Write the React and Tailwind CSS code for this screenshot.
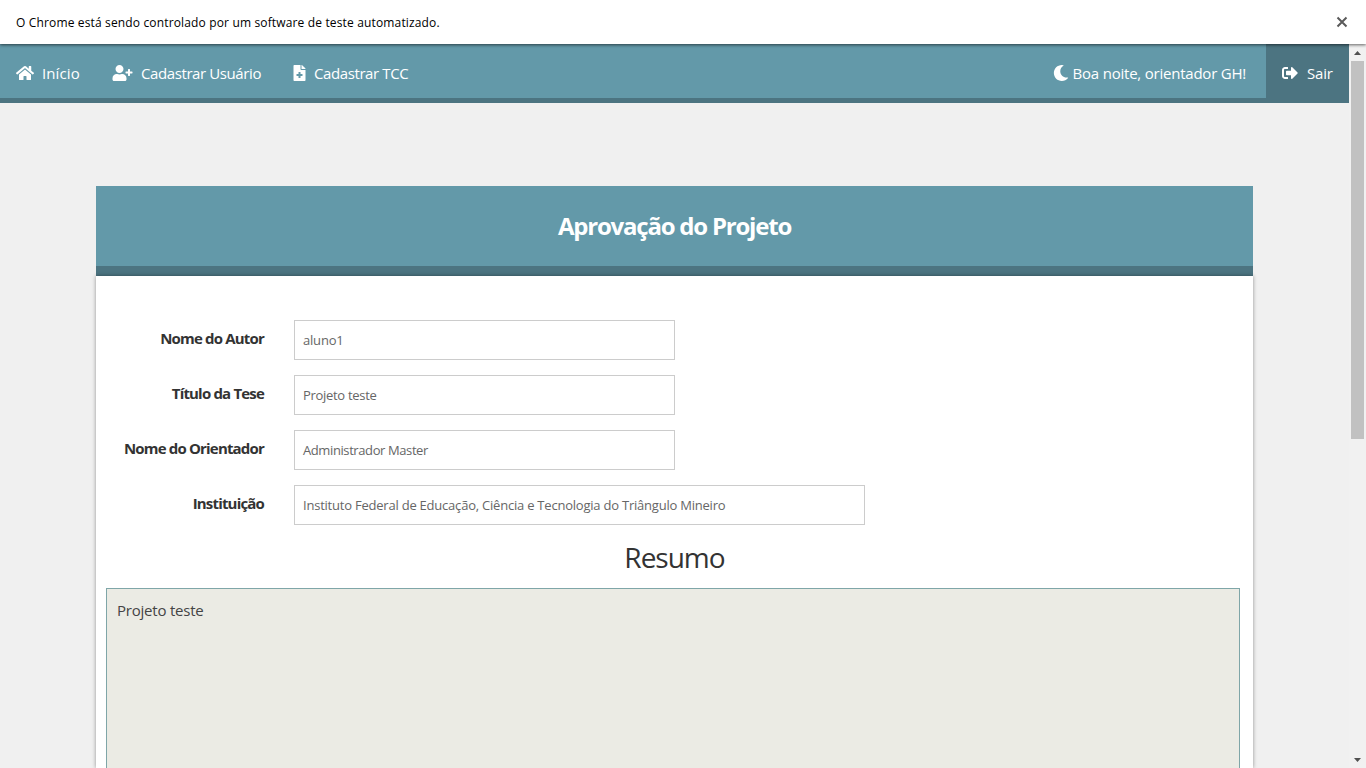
import { FaHome, FaUserPlus, FaFileMedical, FaMoon, FaSignOutAlt } from 'react-icons/fa';

function InfoBar() {
  return (
    <div className="relative z-10 flex h-11 shrink-0 items-center justify-between bg-white pr-[18px] pl-4 shadow-[0_1px_3px_rgba(0,0,0,0.6)]">
      <span className="pt-px text-[12px] tracking-[0.15px] text-black">
        O Chrome está sendo controlado por um software de teste automatizado.
      </span>
      <svg width="12" height="12" viewBox="0 0 12 12" className="text-[#5a5a5a]">
        <path d="M1.5 1.5l9 9M10.5 1.5l-9 9" stroke="currentColor" strokeWidth="2" />
      </svg>
    </div>
  );
}

function NavBar() {
  return (
    <nav className="flex h-[59px] items-stretch border-b-[5px] border-[#4c7481] bg-[#6399a9] text-[15px] text-white">
      <a className="flex w-[96px] items-center gap-2 pt-1 pl-4 whitespace-nowrap">
        <FaHome size={18} />
        <span className="tracking-[0.1px]">Início</span>
      </a>
      <a className="flex w-[182px] items-center gap-2 pt-1 pl-4 whitespace-nowrap">
        <FaUserPlus className="h-4 w-[21px]" />
        <span className="tracking-[-0.4px]">Cadastrar Usuário</span>
      </a>
      <a className="flex items-center gap-2 pt-1 pl-[15px] whitespace-nowrap">
        <FaFileMedical size={16} className="w-[13px]" />
        <span className="tracking-[-0.4px]">Cadastrar TCC</span>
      </a>
      <div className="ml-auto flex items-center gap-[3.5px] pt-1 pr-5 whitespace-nowrap">
        <FaMoon size={16} />
        <span className="tracking-[-0.22px]">Boa noite, orientador GH!</span>
      </div>
      <a className="-mb-[5px] flex w-[83px] items-center gap-[9px] bg-[#4c7481] pb-[1px] pl-4 whitespace-nowrap">
        <FaSignOutAlt size={16} />
        <span className="tracking-[-0.2px]">Sair</span>
      </a>
    </nav>
  );
}

function Field({ label, value, boxClass, valueClass }) {
  return (
    <div className="flex h-10 gap-[30px]">
      <label className="w-[168px] pt-[6px] text-right text-[15px] leading-6 font-bold tracking-[-0.82px] whitespace-nowrap text-[#333]">
        {label}
      </label>
      <div className={`flex items-center border border-[#ccc] px-2 pt-[2px] text-[13px] whitespace-nowrap text-[#666] ${boxClass}`}>
        <span className={valueClass}>{value}</span>
      </div>
    </div>
  );
}

function Scrollbar() {
  return (
    <div className="flex w-[17px] shrink-0 flex-col items-center bg-[#f1f1f1]">
      <div className="flex h-[17px] items-center justify-center">
        <svg width="7" height="4" viewBox="0 0 7 4"><path d="M3.5 0L7 4H0z" fill="#505050" /></svg>
      </div>
      <div className="h-[378px] w-[13px] bg-[#c1c1c1]" />
      <div className="mt-auto flex h-[17px] items-center justify-center">
        <svg width="7" height="4" viewBox="0 0 7 4"><path d="M0 0h7L3.5 4z" fill="#505050" /></svg>
      </div>
    </div>
  );
}

export default function App() {
  return (
    <div className="flex h-screen flex-col overflow-hidden bg-[#f0f0f0] font-['Open_Sans','Noto_Sans',sans-serif]">
      <InfoBar />
      <div className="flex min-h-0 flex-1">
        <div className="flex min-w-0 flex-1 flex-col overflow-hidden">
          <NavBar />
          <main className="mx-24 mt-[83px] flex min-h-0 flex-1 flex-col">
            <header className="flex h-[90px] shrink-0 items-center justify-center border-b-[10px] border-[#4c7481] bg-[#6399a9]">
              <h1 className="text-[24px] font-bold tracking-[-1.22px] whitespace-nowrap text-white">
                Aprovação do Projeto
              </h1>
            </header>
            <section className="flex min-h-0 flex-1 flex-col bg-white shadow-[0_0_4px_rgba(0,0,0,0.4)]">
              <div className="mt-11 flex shrink-0 flex-col gap-[15px]">
                <Field label="Nome do Autor" value="aluno1" boxClass="w-[381px]" valueClass="tracking-[-0.2px]" />
                <Field label="Título da Tese" value="Projeto teste" boxClass="w-[381px]" valueClass="tracking-[-0.3px]" />
                <Field label="Nome do Orientador" value="Administrador Master" boxClass="w-[381px]" valueClass="tracking-[-0.4px]" />
                <Field label="Instituição" value="Instituto Federal de Educação, Ciência e Tecnologia do Triângulo Mineiro" boxClass="w-[571px]" valueClass="tracking-[-0.22px]" />
              </div>
              <h2 className="flex h-[63px] shrink-0 items-center justify-center text-[28px] tracking-[-1px] text-[#333]">
                Resumo
              </h2>
              <div className="mr-[13px] ml-[10px] flex-1 border border-b-0 border-[#7fa6a8] bg-[#ebebe4] px-[10px] pt-[9px] text-[15px] leading-6 tracking-[-0.22px] text-[#444]">
                Projeto teste
              </div>
            </section>
          </main>
        </div>
        <Scrollbar />
      </div>
    </div>
  );
}
